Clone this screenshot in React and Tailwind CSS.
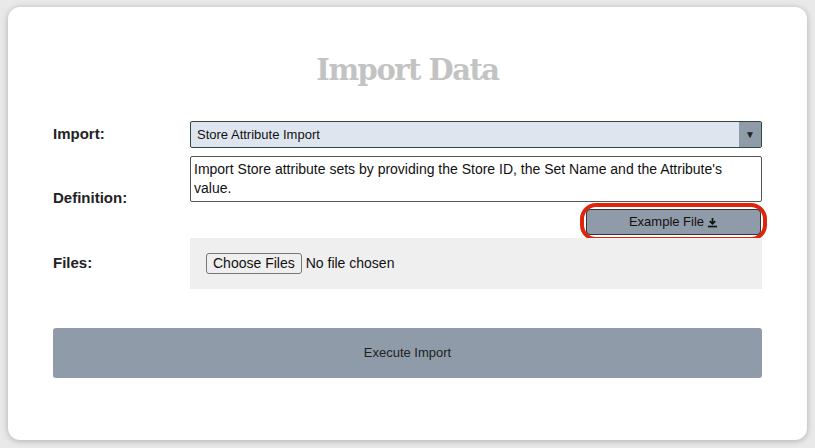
export default function App() {
  return (
    <div className="w-[815px] h-[448px] bg-[#e9e9e9] pt-[7px] px-[8px]" style={{ fontFamily: '"Liberation Sans", Arial, sans-serif' }}>
      <div className="w-[799px] h-[433px] bg-white rounded-[12px] shadow-[0_1px_6px_rgba(0,0,0,0.25)] px-[45px] pt-[45px]">
        <h1 className="text-center text-[29px] font-bold text-[#c3c3c3] leading-[36px] h-[36px]" style={{ fontFamily: '"DejaVu Serif", serif', letterSpacing: '-1.5px' }}>Import Data</h1>
        <div className="mt-[33px] flex items-center">
          <div className="w-[137px] text-[15px] font-bold text-[#222]">Import:</div>
          <div className="flex-1 h-[27px] bg-[#dfe5ee] border border-[#2e4a44] rounded-[2px] flex items-center">
            <span className="flex-1 pl-[6px] text-[13px] text-[#111]">Store Attribute Import</span>
            <span className="w-[22px] h-full bg-[#8f9ba8] flex items-center justify-center text-[10px] text-[#222]">▼</span>
          </div>
        </div>
        <div className="mt-[8px] flex">
          <div className="w-[137px] text-[15px] font-bold text-[#222] pt-[31px]">Definition:</div>
          <div className="flex-1 flex flex-col items-end">
            <div className="w-full h-[46px] border border-[#555] rounded-[2px] px-[3px] pt-[3px] text-[14px] leading-[19px] text-[#111]">Import Store attribute sets by providing the Store ID, the Set Name and the Attribute's value.</div>
            <div className="mt-[1px] p-[2px] border-[4px] border-[#e0240c] rounded-[16px] -mr-[5px]">
              <div className="w-[175px] h-[26px] bg-[#8f9ba8] border border-[#333] rounded-[4px] flex items-center justify-center gap-[3px] text-[13px] text-[#111]">
                Example File
                <svg width="11" height="11" viewBox="0 0 12 12"><path d="M6 1v6M3 4.5l3 3 3-3" stroke="#111" strokeWidth="1.8" fill="none"/><rect x="1" y="9.5" width="10" height="1.8" fill="#111"/></svg>
              </div>
            </div>
          </div>
        </div>
        <div className="-mt-[3px] flex items-center">
          <div className="w-[137px] text-[15px] font-bold text-[#222]">Files:</div>
          <div className="flex-1 h-[51px] bg-[#efefef] flex items-center pl-[16px] text-[14px] text-[#111]">
            <span className="border border-[#777] rounded-[3px] bg-[#efefef] px-[6px] h-[21px] flex items-center">Choose Files</span>
            <span className="ml-[4px]">No file chosen</span>
          </div>
        </div>
        <div className="mt-[39px] h-[50px] bg-[#8f9ba8] rounded-[3px] flex items-center justify-center text-[13px] text-[#222]">Execute Import</div>
      </div>
    </div>
  );
}
